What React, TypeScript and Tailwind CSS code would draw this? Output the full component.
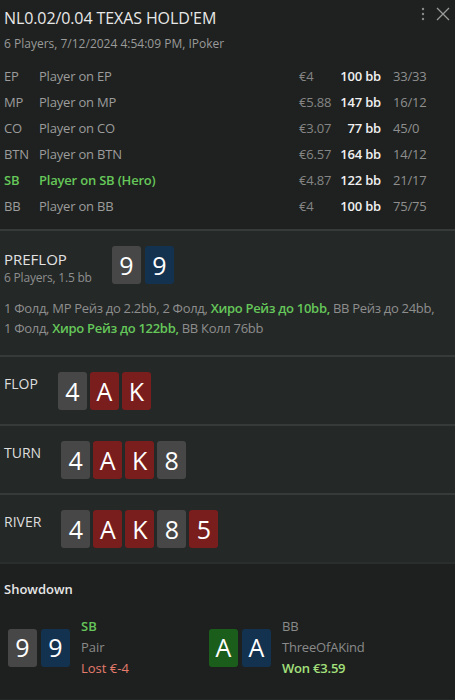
import React from 'react';

type Color = 'gray' | 'red' | 'blue' | 'green';

const cardBg: Record<Color, string> = {
  gray: 'bg-[#474747]',
  red: 'bg-[#7a1d1d]',
  blue: 'bg-[#13324f]',
  green: 'bg-[#1b5e1b]',
};

function Card({ rank, color }: { rank: string; color: Color }) {
  return (
    <div
      className={`${cardBg[color]} w-[29px] h-[38px] rounded-[3px] flex items-center justify-center text-[25px] leading-none text-white`}
    >
      {rank}
    </div>
  );
}

const players = [
  { pos: 'EP', name: 'Player on EP', cash: '€4', bb: '100 bb', stats: '33/33' },
  { pos: 'MP', name: 'Player on MP', cash: '€5.88', bb: '147 bb', stats: '16/12' },
  { pos: 'CO', name: 'Player on CO', cash: '€3.07', bb: '77 bb', stats: '45/0' },
  { pos: 'BTN', name: 'Player on BTN', cash: '€6.57', bb: '164 bb', stats: '14/12' },
  { pos: 'SB', name: 'Player on SB (Hero)', cash: '€4.87', bb: '122 bb', stats: '21/17', hero: true },
  { pos: 'BB', name: 'Player on BB', cash: '€4', bb: '100 bb', stats: '75/75' },
];

const streets: { label: string; cards: [string, Color][] }[] = [
  { label: 'FLOP', cards: [['4', 'gray'], ['A', 'red'], ['K', 'red']] },
  { label: 'TURN', cards: [['4', 'gray'], ['A', 'red'], ['K', 'red'], ['8', 'gray']] },
  { label: 'RIVER', cards: [['4', 'gray'], ['A', 'red'], ['K', 'red'], ['8', 'gray'], ['5', 'red']] },
];

export default function App() {
  return (
    <div
      className="w-[455px] h-[700px] overflow-hidden bg-[#1e211f] text-[#a3a3a3] flex flex-col"
      style={{ fontFamily: '"Open Sans", "Noto Sans", sans-serif' }}
    >
      {/* Header */}
      <div className="relative px-1 pt-[6px]">
        <div className="text-[16px] leading-[24px] text-[#e8e8e8] tracking-[-0.1px]">NL0.02/0.04 TEXAS HOLD'EM</div>
        <div className="text-[12px] leading-[20px] mt-[4px] text-[#9a9a9a]">
          6 Players, 7/12/2024 4:54:09 PM, IPoker
        </div>
        <div className="absolute right-[4px] top-[6px] flex items-center gap-[10px]">
          <svg width="4" height="14" viewBox="0 0 4 14" className="text-[#8a8a8a]">
            <circle cx="2" cy="2" r="1.2" fill="currentColor" />
            <circle cx="2" cy="7" r="1.2" fill="currentColor" />
            <circle cx="2" cy="12" r="1.2" fill="currentColor" />
          </svg>
          <svg width="16" height="16" viewBox="0 0 16 16" className="text-[#9a9a9a]">
            <path d="M2 2 L14 14 M14 2 L2 14" stroke="currentColor" strokeWidth="1.3" fill="none" />
          </svg>
        </div>
      </div>

      {/* Players */}
      <div className="mt-[10px] mb-[9px]">
        {players.map((p) => (
          <div key={p.pos} className="flex items-center h-[26px] text-[13px] tracking-[-0.2px]">
            <div className={`w-[39px] pl-1 ${p.hero ? 'text-[#66c75a] font-semibold' : 'text-[#9c9c9c]'}`}>{p.pos}</div>
            <div className={`flex-1 ${p.hero ? 'text-[#66c75a] font-semibold' : 'text-[#9c9c9c]'}`}>{p.name}</div>
            <div className="w-[40px] text-[#858585]">{p.cash}</div>
            <div className="w-[42px] text-right text-[#f0f0f0] font-semibold whitespace-nowrap">{p.bb}</div>
            <div className="w-[74px] pl-[12px] text-[#8f8f8f]">{p.stats}</div>
          </div>
        ))}
      </div>

      {/* Preflop */}
      <div className="border-t-2 border-[#363a39] bg-[#242827] px-1 pt-[15px] pb-[17px]">
        <div className="flex items-start gap-5">
          <div className="pt-[3px]">
            <div className="text-[15px] leading-[20px] text-[#e2e2e2]">PREFLOP</div>
            <div className="text-[12px] leading-[18px] text-[#8e8e8e] tracking-[-0.2px]">6 Players, 1.5 bb</div>
          </div>
          <div className="flex gap-[4px]">
            <Card rank="9" color="gray" />
            <Card rank="9" color="blue" />
          </div>
        </div>
        <div className="mt-[11px] text-[13px] leading-[20px] text-[#8e8e8e] tracking-[-0.3px]">
          1 Фолд, MP Рейз до 2.2bb, 2 Фолд, <span className="text-[#66c75a] font-semibold">Хиро Рейз до 10bb,</span> BB Рейз до 24bb,
          <br />
          1 Фолд, <span className="text-[#66c75a] font-semibold">Хиро Рейз до 122bb,</span> BB Колл 76bb
        </div>
      </div>

      {/* Streets */}
      {streets.map((s) => (
        <div key={s.label} className="border-t-2 border-[#363a39] bg-[#242827] px-1 pt-[15px] pb-[14px] flex items-start gap-5">
          <div className="text-[14px] leading-[20px] pt-[2px] text-[#dedede]">{s.label}</div>
          <div className="flex gap-[3px]">
            {s.cards.map(([r, c], i) => (
              <Card key={i} rank={r} color={c} />
            ))}
          </div>
        </div>
      ))}

      {/* Showdown */}
      <div className="border-t-2 border-[#2a2e2d] bg-[#1d201f] px-1 pt-[15px] pb-[20px]">
        <div className="text-[13px] leading-[20px] font-semibold text-[#e6e6e6]">Showdown</div>
        <div className="flex mt-[17px] pl-1">
          <div className="w-[201px] flex items-center">
            <div className="flex gap-[4px]">
              <Card rank="9" color="gray" />
              <Card rank="9" color="blue" />
            </div>
            <div className="ml-[11px] text-[13px] leading-[21px]">
              <div className="text-[#66c75a] font-semibold">SB</div>
              <div className="text-[#8a8a8a]">Pair</div>
              <div className="text-[#e57b6c]">Lost €-4</div>
            </div>
          </div>
          <div className="flex items-center">
            <div className="flex gap-[4px]">
              <Card rank="A" color="green" />
              <Card rank="A" color="blue" />
            </div>
            <div className="ml-[11px] text-[13px] leading-[21px] tracking-[-0.2px]">
              <div className="text-[#8a8a8a]">BB</div>
              <div className="text-[#8a8a8a]">ThreeOfAKind</div>
              <div className="text-[#a5e07c] font-semibold">Won €3.59</div>
            </div>
          </div>
        </div>
      </div>
      <div className="flex-1 bg-[#242827]" />
    </div>
  );
}
